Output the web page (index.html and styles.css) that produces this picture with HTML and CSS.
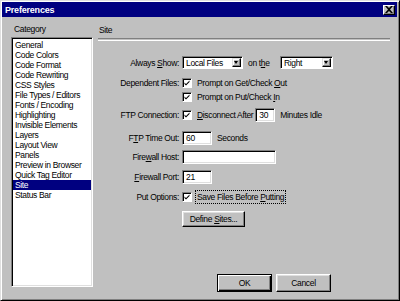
FILE: index.html
```html
<!DOCTYPE html>
<html lang="en">
<head>
    <meta charset="UTF-8">
    <title>Preferences</title>
    <link rel="stylesheet" href="styles.css">
</head>
<body>
    <div class="window">
        <div class="titlebar">
            <span class="title">Preferences</span>
            <span class="close">
                <svg width="8" height="7" viewBox="0 0 8 7"><path d="M0 0h2l2 2 2-2h2L5 3.5 8 7H6L4 5 2 7H0l3-3.5z" fill="#000"/></svg>
            </span>
        </div>
        <div class="content">
            <div class="category">
                <div class="heading">Category</div>
                <ul class="list">
                    <li>General</li>
                    <li>Code Colors</li>
                    <li>Code Format</li>
                    <li>Code Rewriting</li>
                    <li>CSS Styles</li>
                    <li>File Types / Editors</li>
                    <li>Fonts / Encoding</li>
                    <li>Highlighting</li>
                    <li>Invisible Elements</li>
                    <li>Layers</li>
                    <li>Layout View</li>
                    <li>Panels</li>
                    <li>Preview in Browser</li>
                    <li>Quick Tag Editor</li>
                    <li class="selected">Site</li>
                    <li>Status Bar</li>
                </ul>
            </div>
            <div class="panel">
                <div class="heading">Site</div>
                <div class="rule"></div>

                <div class="row row-show">
                    <label class="label">Always <u>S</u>how:</label>
                    <div class="select select-wide"><span>Local Files</span><span class="arrow"></span></div>
                    <span class="text-mid">on t<u>h</u>e</span>
                    <div class="select select-side"><span>Right</span><span class="arrow"></span></div>
                </div>
                <div class="row row-dep">
                    <label class="label">Dependent Files:</label>
                    <span class="check"></span>
                    <span class="text">Prompt on Get/Check <u>O</u>ut</span>
                </div>
                <div class="row">
                    <label class="label"></label>
                    <span class="check"></span>
                    <span class="text">Prompt on Put/Check <u>I</u>n</span>
                </div>
                <div class="row row-ftp">
                    <label class="label">FTP Connection:</label>
                    <span class="check"></span>
                    <span class="text"><u>D</u>isconnect After</span>
                    <span class="field field-small">30</span>
                    <span class="text-after">Minutes Idle</span>
                </div>
                <div class="row row-timeout">
                    <label class="label">F<u>T</u>P Time Out:</label>
                    <span class="field field-num">60</span>
                    <span class="text-after">Seconds</span>
                </div>
                <div class="row row-host">
                    <label class="label">Fire<u>w</u>all Host:</label>
                    <span class="field field-host"></span>
                </div>
                <div class="row row-port">
                    <label class="label"><u>F</u>irewall Port:</label>
                    <span class="field field-num">21</span>
                </div>
                <div class="row row-put">
                    <label class="label">Put Options:</label>
                    <span class="check"></span>
                    <span class="text focus">Save Files Before <u>P</u>utting</span>
                </div>
                <div class="row row-define">
                    <label class="label"></label>
                    <button class="btn btn-define">Define <u>S</u>ites...</button>
                </div>

                <div class="actions">
                    <button class="btn btn-default">OK</button>
                    <button class="btn">Cancel</button>
                </div>
            </div>
        </div>
    </div>
</body>
</html>
```

FILE: styles.css
```css
body {
    margin: 0;
    background-color: #c0c0c0;
    font-family: 'Liberation Sans', Arial, sans-serif;
    font-size: 8.5px;
    letter-spacing: -0.35px;
    color: #000;
}
.window {
    width: 400px;
    height: 301px;
    box-sizing: border-box;
    background-color: #c0c0c0;
    border: 1px solid;
    border-color: #dfdfdf #000 #000 #dfdfdf;
    box-shadow: inset 1px 1px #fff, inset -1px -1px #808080;
    padding: 1px 2px 2px 1px;
    display: flex;
    flex-direction: column;
}
.titlebar {
    height: 15px;
    background-color: #000080;
    display: flex;
    align-items: center;
    justify-content: space-between;
    padding: 0 2px 0 3px;
}
.title {
    color: #fff;
    font-weight: bold;
    font-size: 9px;
    letter-spacing: -0.2px;
}
.close {
    width: 10px;
    height: 8px;
    background-color: #c0c0c0;
    border: 1px solid;
    border-color: #fff #000 #000 #fff;
    box-shadow: inset -1px -1px #808080;
    display: flex;
    align-items: center;
    justify-content: center;
}
.content {
    flex: 1;
    display: flex;
    padding: 7px 0 0 8px;
}
.heading {
    height: 10px;
    line-height: 10px;
    padding-left: 4px;
}
.category {
    width: 84px;
}
.list {
    list-style: none;
    margin: 3px 0 0 1px;
    padding: 2px 0 0 0;
    height: 250px;
    box-sizing: border-box;
    width: 82px;
    background-color: #fff;
    border: 1px solid;
    border-color: #808080 #fff #fff #808080;
    box-shadow: inset 1px 1px #000, inset -1px -1px #dfdfdf;
}
.list li {
    height: 10px;
    line-height: 10px;
    padding-left: 2px;
    margin: 0 1px 0 1px;
    white-space: nowrap;
}
.list li.selected {
    background-color: #000080;
    color: #fff;
}
.panel {
    flex: 1;
    margin-left: 5px;
    margin-right: 7px;
    display: flex;
    flex-direction: column;
}
.panel .heading {
    padding-left: 0;
    margin-top: 1px;
}
.rule {
    margin-top: 3px;
    height: 1px;
    border-top: 1px solid #808080;
    border-bottom: 1px solid #fff;
    margin-left: -1px;
}
.row {
    display: flex;
    align-items: center;
    height: 14px;
    white-space: nowrap;
}
.label {
    width: 83px;
    text-align: right;
    padding-right: 3px;
    box-sizing: border-box;
}
.row-show { margin-top: 15px; height: 13px; }
.row-dep { margin-top: 7px; }
.row-ftp { margin-top: 4px; }
.row-timeout { margin-top: 9px; }
.row-host { margin-top: 5px; }
.row-port { margin-top: 6px; }
.row-put { margin-top: 6px; }
.row-define { margin-top: 7px; height: 16px; }
.select {
    height: 13px;
    box-sizing: border-box;
    background-color: #fff;
    border: 1px solid;
    border-color: #808080 #fff #fff #808080;
    box-shadow: inset 1px 1px #000;
    display: flex;
    align-items: center;
    justify-content: space-between;
    padding: 0 1px 0 3px;
}
.select-wide { width: 61px; }
.select-side { width: 53px; }
.arrow {
    width: 9px;
    height: 9px;
    box-sizing: border-box;
    background-color: #c0c0c0;
    border: 1px solid;
    border-color: #dfdfdf #000 #000 #dfdfdf;
    box-shadow: inset -1px -1px #808080, inset 1px 1px #fff;
    position: relative;
}
.arrow::after {
    content: '';
    position: absolute;
    left: 1px;
    top: 2px;
    border-left: 2.5px solid transparent;
    border-right: 2.5px solid transparent;
    border-top: 3px solid #000;
}
.text-mid {
    width: 37px;
    padding-left: 5px;
    box-sizing: border-box;
}
.check {
    width: 10px;
    height: 10px;
    box-sizing: border-box;
    background-color: #fff;
    border: 1px solid;
    border-color: #808080 #fff #fff #808080;
    box-shadow: inset 1px 1px #000;
    margin-right: 4px;
    background-image: url("data:image/svg+xml,%3Csvg xmlns='http://www.w3.org/2000/svg' width='8' height='8'%3E%3Cpath d='M1.5 3.5l1.5 1.5 3.5-3.5v1.5l-3.5 3.5-1.5-1.5z' fill='%23000'/%3E%3C/svg%3E");
    background-repeat: no-repeat;
    background-position: 0 0;
}
.text {
    padding: 0 1px;
}
.focus {
    outline: 1px dotted #000;
    outline-offset: 0;
    line-height: 12px;
}
.field {
    height: 14px;
    box-sizing: border-box;
    background-color: #fff;
    border: 1px solid;
    border-color: #808080 #fff #fff #808080;
    box-shadow: inset 1px 1px #000, inset -1px -1px #dfdfdf;
    padding: 0 3px;
    line-height: 12px;
}
.field-small { width: 20px; margin-left: 1px; }
.field-num { width: 30px; }
.field-host { width: 94px; }
.text-after { padding-left: 5px; }
.btn {
    font-family: inherit;
    font-size: 8.5px;
    letter-spacing: -0.35px;
    color: #000;
    background-color: #c0c0c0;
    border: 1px solid;
    border-color: #fff #000 #000 #fff;
    box-shadow: inset -1px -1px #808080, inset 1px 1px #dfdfdf;
    padding: 0;
    height: 18px;
    width: 55px;
    box-sizing: border-box;
}
.btn-define {
    width: 63px;
    height: 16px;
}
.btn-default {
    border: 1px solid #000;
    box-shadow: inset 1px 1px #fff, inset -1px -1px #000, inset -2px -2px #808080;
}
.actions {
    margin-top: auto;
    margin-bottom: 6px;
    display: flex;
    gap: 4px;
    padding-left: 118px;
}
```
